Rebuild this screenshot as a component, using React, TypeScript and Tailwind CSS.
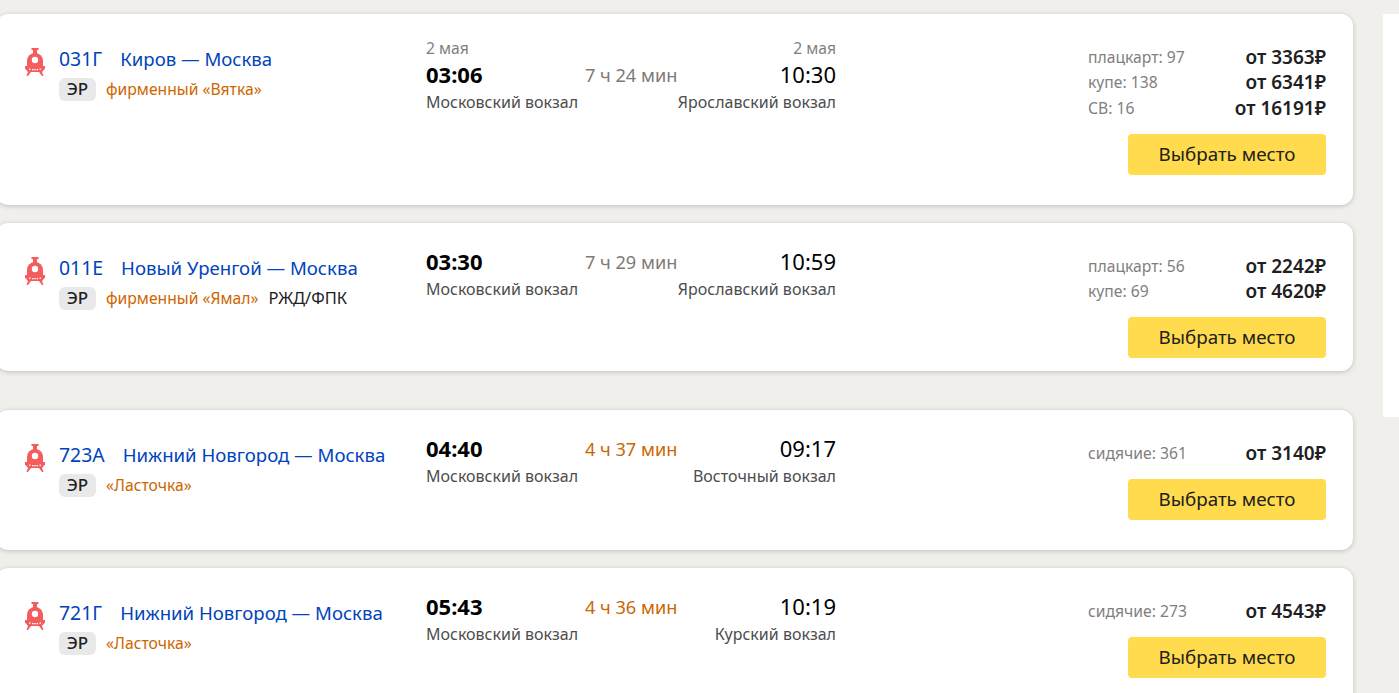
import React from 'react';

type Seat = { name: string; price: string };

type Trip = {
    num: string;
    route: string;
    tag: string;
    carrier?: string;
    date?: boolean;
    from: string;
    to: string;
    dep: string;
    arr: string;
    dur: string;
    fast?: boolean;
    seats: Seat[];
    pb: string;
    mt: string;
};

const trips: Trip[] = [
    {
        num: '031Г',
        route: 'Киров — Москва',
        tag: 'фирменный «Вятка»',
        date: true,
        dep: '03:06',
        arr: '10:30',
        dur: '7 ч 24 мин',
        from: 'Московский вокзал',
        to: 'Ярославский вокзал',
        seats: [
            { name: 'плацкарт: 97', price: 'от 3363₽' },
            { name: 'купе: 138', price: 'от 6341₽' },
            { name: 'СВ: 16', price: 'от 16191₽' },
        ],
        pb: 'pb-[30px]',
        mt: 'mt-[14px]',
    },
    {
        num: '011Е',
        route: 'Новый Уренгой — Москва',
        tag: 'фирменный «Ямал»',
        carrier: 'РЖД/ФПК',
        dep: '03:30',
        arr: '10:59',
        dur: '7 ч 29 мин',
        from: 'Московский вокзал',
        to: 'Ярославский вокзал',
        seats: [
            { name: 'плацкарт: 56', price: 'от 2242₽' },
            { name: 'купе: 69', price: 'от 4620₽' },
        ],
        pb: 'pb-[13px]',
        mt: 'mt-[18px]',
    },
    {
        num: '723А',
        route: 'Нижний Новгород — Москва',
        tag: '«Ласточка»',
        dep: '04:40',
        arr: '09:17',
        dur: '4 ч 37 мин',
        fast: true,
        from: 'Московский вокзал',
        to: 'Восточный вокзал',
        seats: [{ name: 'сидячие: 361', price: 'от 3140₽' }],
        pb: 'pb-[30px]',
        mt: 'mt-[39px]',
    },
    {
        num: '721Г',
        route: 'Нижний Новгород — Москва',
        tag: '«Ласточка»',
        dep: '05:43',
        arr: '10:19',
        dur: '4 ч 36 мин',
        fast: true,
        from: 'Московский вокзал',
        to: 'Курский вокзал',
        seats: [{ name: 'сидячие: 273', price: 'от 4543₽' }],
        pb: 'pb-[30px]',
        mt: 'mt-[18px]',
    },
];

function TrainIcon() {
    return (
        <svg width="22" height="30" viewBox="0 0 22 30" className="-ml-[1px] shrink-0" fill="#f45d5d">
            <path d="M7.5 1h7v2H13v4H9V3H7.5z" />
            <path d="M11 6a8 8 0 0 1 8 8v5H3v-5a8 8 0 0 1 8-8z" />
            <circle cx="11" cy="13" r="3.2" fill="#fff" />
            <path d="M1 19h20v2.5L18 25H4l-3-3.5z" />
            <path d="M4 25h3l-3 4H2.5zM15 25h3l1.5 4H18z" />
            <path d="M5 21.5h1.5v1.2H5zM8 22h1.5v1.2H8zM10.3 22h1.5v1.2h-1.5zM12.6 22h1.5v1.2h-1.5zM15.5 21.5H17v1.2h-1.5z" fill="#fff" />
        </svg>
    );
}

function TripCard({ trip }: { trip: Trip }) {
    return (
        <div
            className={`flex items-start rounded-xl bg-white pl-[29px] pt-[30px] shadow-[0_1px_5px_rgba(0,0,0,0.2)] ${trip.pb} ${trip.mt}`}
        >
            <div className="mt-[3px] w-[34px]">
                <TrainIcon />
            </div>
            <div className="w-[367px]">
                <div className="flex h-[30px] items-center gap-[18px] text-[18.6px] text-[#0044bb]">
                    <span className="text-[19.4px]">{trip.num}</span>
                    <span>{trip.route}</span>
                </div>
                <div className="mt-[3px] flex h-[24px] items-center text-[15.7px]">
                    <span className="mr-[10px] flex h-[23px] w-[37px] items-center justify-center rounded-md bg-[#e9e9e9] text-[17px] font-medium text-[#21201f]">
                        ЭР
                    </span>
                    <span className="pt-[2px] text-[#cc6600]">{trip.tag}</span>
                    {trip.carrier && <span className="ml-[10px] text-[16.5px] text-[#21201f]">{trip.carrier}</span>}
                </div>
            </div>
            <div className="-mt-[4px] w-[410px] text-[#21201f]">
                {trip.date && (
                    <div className="flex h-[22px] justify-between text-[15.7px] leading-[16px] text-[#7f7f7f]">
                        <span>2 мая</span>
                        <span>2 мая</span>
                    </div>
                )}
                <div className="flex h-[26px] items-center justify-between pb-[2px] text-[22px]">
                    <span className="font-bold text-black">{trip.dep}</span>
                    <span className={trip.fast ? 'pt-[3px] text-[18.2px] text-[#cc6600]' : 'pt-[3px] text-[18.2px] text-[#7f7a75]'}>{trip.dur}</span>
                    <span className="text-black">{trip.arr}</span>
                </div>
                <div className="mt-[2px] flex h-[24px] items-center justify-between text-[16px] text-[#4d4d4d]">
                    <span>{trip.from}</span>
                    <span>{trip.to}</span>
                </div>
            </div>
            <div className="ml-[252px] w-[238px]">
                {trip.seats.map(seat => (
                    <div key={seat.name} className="flex h-[25.5px] items-center justify-between">
                        <span className="pt-[2px] text-[15.7px] text-[#7f7f7f]">{seat.name}</span>
                        <span className="text-[19px] font-semibold text-[#21201f]">{seat.price}</span>
                    </div>
                ))}
                <button
                    type="button"
                    className={`ml-[40px] block h-[41px] w-[198px] rounded-[4px] bg-[#ffdb4d] text-[18.8px] text-[#21201f] ${trip.seats.length === 2 ? 'mt-[13px]' : 'mt-[13.5px]'}`}
                >
                    Выбрать место
                </button>
            </div>
        </div>
    );
}

export default function App() {
    return (
        <div className="flex h-[693px] overflow-hidden bg-[#f0efeb] font-['Noto_Sans',sans-serif]">
            <div className="-ml-[4px] w-[1357px] shrink-0">
                {trips.map(trip => (
                    <TripCard key={trip.num} trip={trip} />
                ))}
            </div>
            <div className="ml-[30px] mt-[14px] h-[403px] flex-1 bg-white" />
        </div>
    );
}
